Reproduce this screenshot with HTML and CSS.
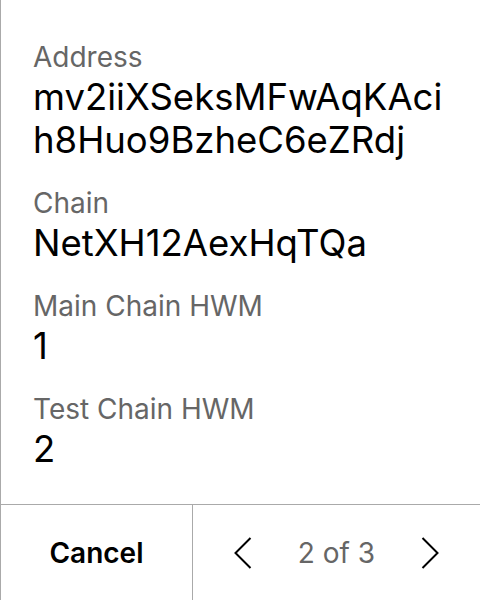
FILE: index.html
```html
<!DOCTYPE html>
<html>
<head>
<meta charset="utf-8">
<link rel="stylesheet" href="styles.css">
</head>
<body>
<div class="panel">
  <div class="content">
    <div class="field">
      <div class="label">Address</div>
      <div class="value">mv2iiXSeksMFwAqKAci<br>h8Huo9BzheC6eZRdj</div>
    </div>
    <div class="field">
      <div class="label">Chain</div>
      <div class="value">NetXH12AexHqTQa</div>
    </div>
    <div class="field">
      <div class="label">Main Chain HWM</div>
      <div class="value">1</div>
    </div>
    <div class="field">
      <div class="label">Test Chain HWM</div>
      <div class="value">2</div>
    </div>
  </div>
  <div class="footer">
    <button class="cancel">Cancel</button>
    <div class="pager">
      <button class="chev" aria-label="Previous">
        <svg width="18" height="32" viewBox="0 0 18 32"><path d="M16.5 1 L1.5 16 L16.5 31" fill="none" stroke="#000" stroke-width="2"/></svg>
      </button>
      <span class="count">2 of 3</span>
      <button class="chev" aria-label="Next">
        <svg width="18" height="32" viewBox="0 0 18 32"><path d="M1.5 1 L16.5 16 L1.5 31" fill="none" stroke="#000" stroke-width="2"/></svg>
      </button>
    </div>
  </div>
</div>
</body>
</html>
```
FILE: styles.css
```css
* { box-sizing: border-box; }
html, body { margin: 0; padding: 0; background: #fff; }
body { font-family: Inter, "Noto Sans", sans-serif; color: #000; }
.panel {
  width: 480px;
  height: 600px;
  border-left: 1px solid #aaa;
  display: flex;
  flex-direction: column;
}
.content {
  flex: 1;
  padding: 42px 32px 0 32px;
  display: flex;
  flex-direction: column;
  gap: 26px;
}
.label {
  font-size: 28px;
  line-height: 31px;
  margin-bottom: 3px;
  color: #666;
}
.value {
  font-size: 36.5px;
  line-height: 43px;
  color: #000;
}
.footer {
  height: 96px;
  border-top: 1px solid #aaa;
  display: flex;
}
.cancel {
  width: 192px;
  border: 0;
  border-right: 1px solid #aaa;
  background: none;
  font-family: inherit;
  font-size: 28px;
  font-weight: 600;
  color: #000;
  padding: 0;
}
.pager {
  flex: 1;
  display: flex;
  align-items: center;
  justify-content: center;
  gap: 46px;
}
.chev {
  border: 0;
  background: none;
  padding: 0;
  display: flex;
}
.count {
  font-size: 28px;
  color: #666;
}
```
